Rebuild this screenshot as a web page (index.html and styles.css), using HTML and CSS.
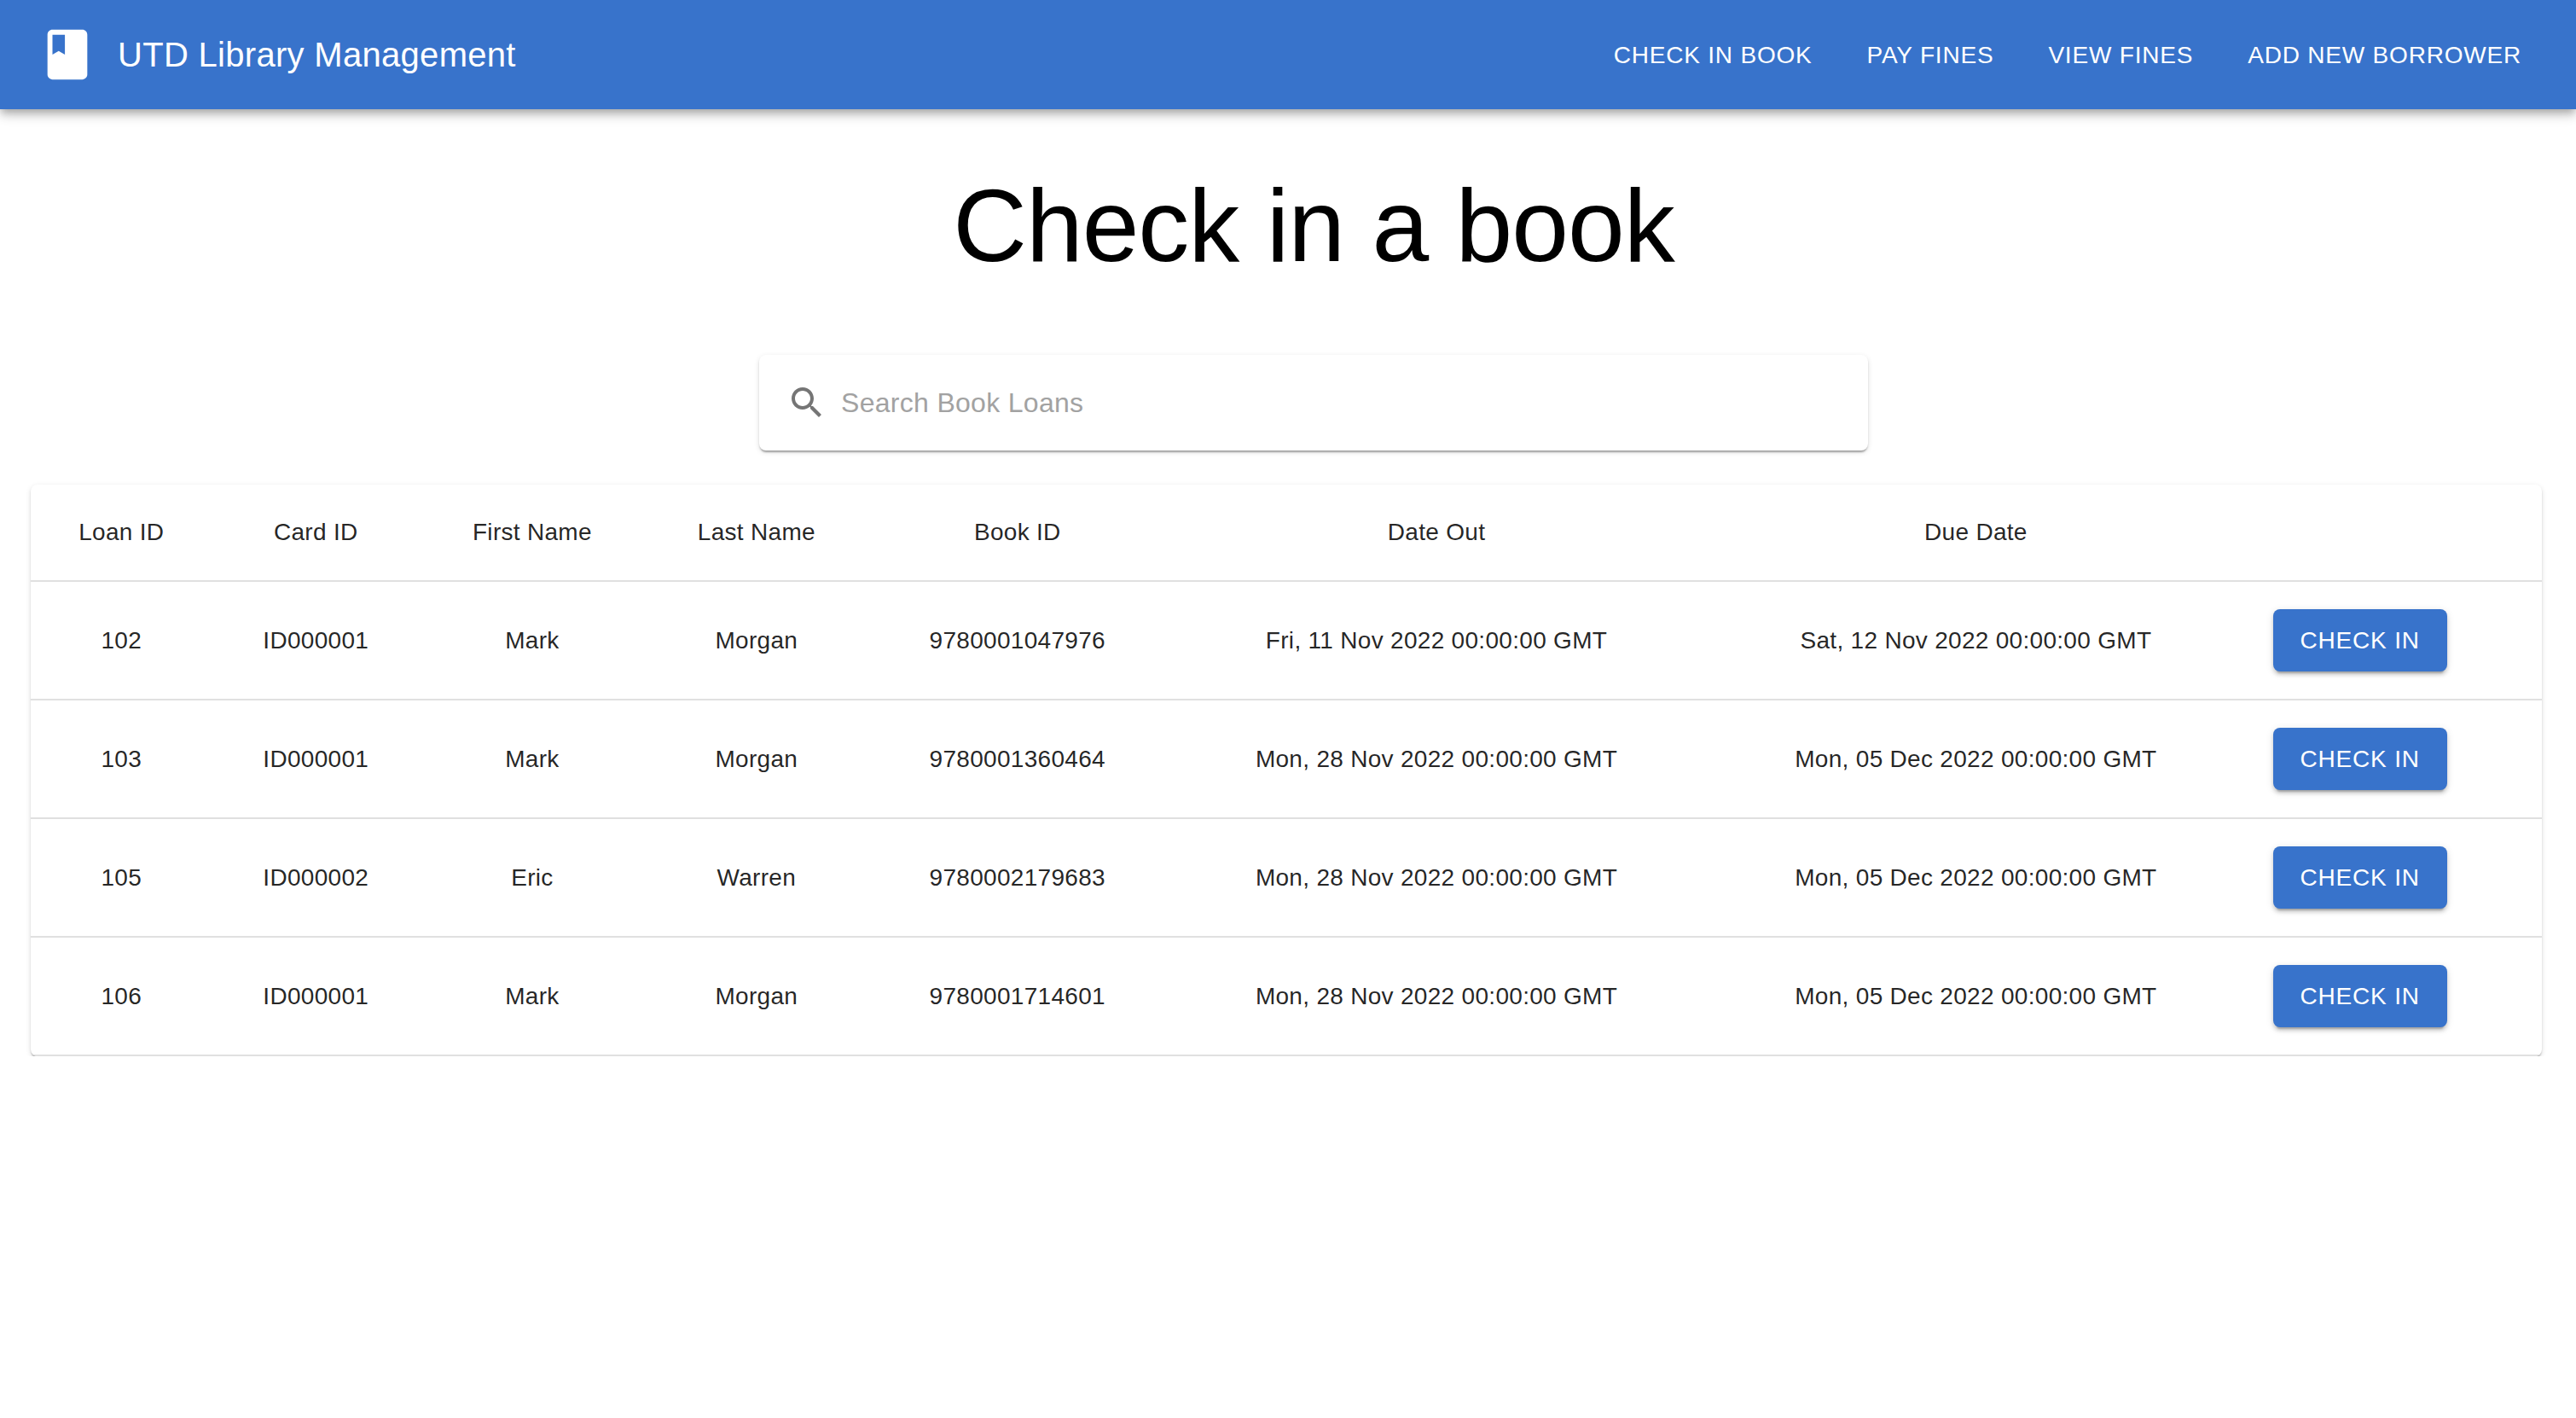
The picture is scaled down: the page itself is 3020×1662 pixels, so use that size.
FILE: index.html
```html
<!DOCTYPE html>
<html lang="en">
<head>
  <meta charset="utf-8">
  <title>UTD Library Management</title>
  <link rel="stylesheet" href="styles.css">
</head>
<body>
  <header class="app-bar">
    <svg class="app-bar__logo" viewBox="0 0 24 24" aria-hidden="true"><path d="M18 2H6c-1.1 0-2 .9-2 2v16c0 1.1.9 2 2 2h12c1.1 0 2-.9 2-2V4c0-1.1-.9-2-2-2zM6 4h5v8l-2.500-1.500L6 12V4z"/></svg>
    <span class="app-bar__title">UTD Library Management</span>
    <nav class="app-bar__nav">
      <a class="nav-link" href="#check-in">CHECK IN BOOK</a>
      <a class="nav-link" href="#pay-fines">PAY FINES</a>
      <a class="nav-link" href="#view-fines">VIEW FINES</a>
      <a class="nav-link" href="#add-borrower">ADD NEW BORROWER</a>
    </nav>
  </header>
  <main>
    <section class="intro">
      <h1 class="intro__title">Check in a book</h1>
      <label class="search">
        <svg class="search__icon" viewBox="0 0 24 24" aria-hidden="true"><path d="M15.500 14h-.79l-.28-.27C15.410 12.590 16 11.110 16 9.500 16 5.910 13.090 3 9.500 3S3 5.910 3 9.500 5.910 16 9.500 16c1.610 0 3.090-.59 4.230-1.570l.27.28v.79l5 4.990L20.490 19l-4.990-5zm-6 0C7.010 14 5 11.990 5 9.500S7.010 5 9.500 5 14 7.010 14 9.500 11.990 14 9.500 14z"/></svg>
        <input class="search__input" type="text" placeholder="Search Book Loans" aria-label="Search Book Loans">
      </label>
    </section>
    <div class="loans">
      <table class="loans__table">
        <thead>
          <tr><th>Loan ID</th><th>Card ID</th><th>First Name</th><th>Last Name</th><th>Book ID</th><th>Date Out</th><th>Due Date</th><td></td></tr>
        </thead>
        <tbody>
          <tr><td>102</td><td>ID000001</td><td>Mark</td><td>Morgan</td><td>9780001047976</td><td>Fri, 11 Nov 2022 00:00:00 GMT</td><td>Sat, 12 Nov 2022 00:00:00 GMT</td><td class="loans__action"><button class="button" type="button">CHECK IN</button></td></tr>
          <tr><td>103</td><td>ID000001</td><td>Mark</td><td>Morgan</td><td>9780001360464</td><td>Mon, 28 Nov 2022 00:00:00 GMT</td><td>Mon, 05 Dec 2022 00:00:00 GMT</td><td class="loans__action"><button class="button" type="button">CHECK IN</button></td></tr>
          <tr><td>105</td><td>ID000002</td><td>Eric</td><td>Warren</td><td>9780002179683</td><td>Mon, 28 Nov 2022 00:00:00 GMT</td><td>Mon, 05 Dec 2022 00:00:00 GMT</td><td class="loans__action"><button class="button" type="button">CHECK IN</button></td></tr>
          <tr><td>106</td><td>ID000001</td><td>Mark</td><td>Morgan</td><td>9780001714601</td><td>Mon, 28 Nov 2022 00:00:00 GMT</td><td>Mon, 05 Dec 2022 00:00:00 GMT</td><td class="loans__action"><button class="button" type="button">CHECK IN</button></td></tr>
        </tbody>
      </table>
    </div>
  </main>
</body>
</html>
```
FILE: styles.css
```css
*,
*::before,
*::after {
  box-sizing: border-box;
}

body {
  margin: 0;
  background: #fff;
  color: rgba(0, 0, 0, 0.87);
  font-family: "Liberation Sans", Arial, sans-serif;
  font-size: 28px;
}

/* Top bar */
.app-bar {
  position: relative;
  display: flex;
  align-items: center;
  min-height: 128px;
  padding: 0 48px 0 44px;
  background: #3873cb;
  color: #fff;
  box-shadow: 0 4px 8px -2px rgba(0, 0, 0, 0.2), 0 8px 10px 0 rgba(0, 0, 0, 0.14), 0 2px 20px 0 rgba(0, 0, 0, 0.12);
}

.app-bar__logo {
  width: 70px;
  height: 70px;
  margin-right: 24px;
  fill: currentColor;
}

.app-bar__title {
  font-size: 40px;
  line-height: 64px;
  letter-spacing: 0.0075em;
}

.app-bar__nav {
  display: flex;
  gap: 32px;
  margin-left: auto;
}

.nav-link {
  padding: 12px 16px;
  color: inherit;
  line-height: 49px;
  letter-spacing: 0.02857em;
  text-decoration: none;
}

/* Heading and search */
.intro {
  display: flex;
  flex-direction: column;
  align-items: center;
  gap: 80px;
  padding: 64px 0 40px 60px;
}

.intro__title {
  margin: 0;
  color: #000;
  font-size: 120px;
  font-weight: 400;
  line-height: 144px;
  letter-spacing: -0.00833em;
}

.search {
  display: flex;
  align-items: center;
  gap: 16px;
  width: 100%;
  max-width: 1300px;
  padding: 32px;
  border-radius: 8px;
  background: #fff;
  box-shadow: 0 4px 2px -2px rgba(0, 0, 0, 0.2), 0 2px 2px 0 rgba(0, 0, 0, 0.14), 0 2px 6px 0 rgba(0, 0, 0, 0.12);
}

.search__icon {
  width: 48px;
  height: 48px;
  fill: #757575;
}

.search__input {
  flex: 1;
  min-width: 0;
  height: 48px;
  padding: 0;
  border: 0;
  outline: 0;
  background: none;
  color: inherit;
  font: inherit;
  font-size: 32px;
  letter-spacing: 0.00938em;
}

.search__input::placeholder {
  color: #a2a2a2;
  opacity: 1;
}

/* Loans table */
.loans {
  margin: 0 40px 0 36px;
  overflow: hidden;
  border-radius: 8px;
  background: #fff;
  box-shadow: 0 4px 2px -2px rgba(0, 0, 0, 0.2), 0 2px 2px 0 rgba(0, 0, 0, 0.14), 0 2px 6px 0 rgba(0, 0, 0, 0.12);
}

.loans__table {
  width: 100%;
  border-spacing: 0;
}

.loans__table th,
.loans__table td {
  padding: 32px;
  border-bottom: 2px solid #e0e0e0;
  font-weight: 400;
  line-height: 40px;
  letter-spacing: 0.01071em;
  text-align: center;
}

.loans__table th {
  line-height: 48px;
}

.loans__table .loans__action {
  text-align: left;
}

.button {
  display: block;
  padding: 12px 32px;
  border: 0;
  border-radius: 8px;
  background: #3873cb;
  color: #fff;
  font: inherit;
  line-height: 49px;
  letter-spacing: 0.02857em;
  white-space: nowrap;
  box-shadow: 0 6px 2px -4px rgba(0, 0, 0, 0.2), 0 4px 4px 0 rgba(0, 0, 0, 0.14), 0 2px 10px 0 rgba(0, 0, 0, 0.12);
  cursor: pointer;
}
```
